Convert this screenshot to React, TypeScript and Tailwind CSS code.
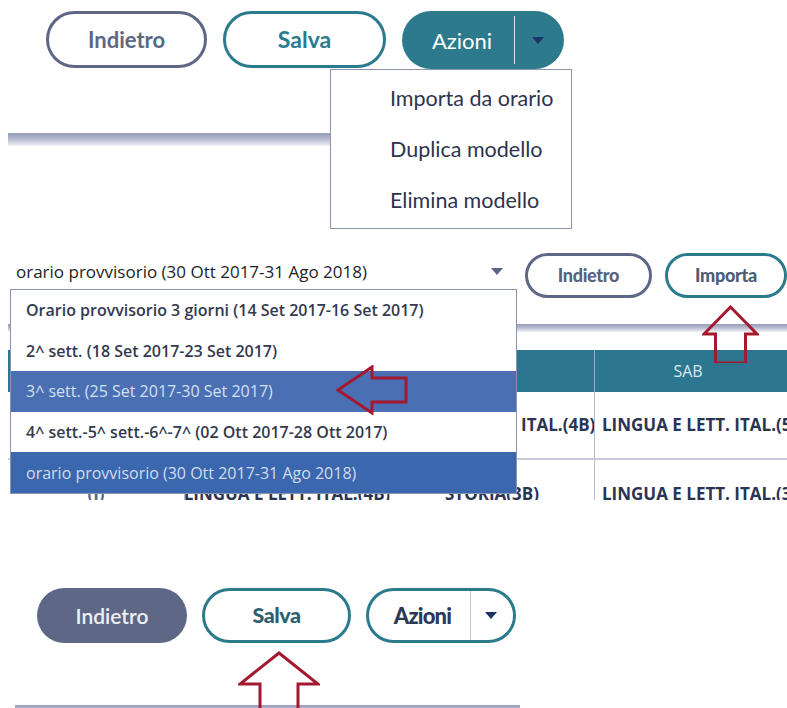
import React from "react";

const lato = { fontFamily: "Lato, 'Open Sans', sans-serif" };
const open = { fontFamily: "'Open Sans', 'Noto Sans', sans-serif" };

function Caret({ className }: { className?: string }) {
  return (
    <svg width="12" height="7" viewBox="0 0 12 7" className={className}>
      <path d="M0 0 L12 0 L6 7 Z" fill="currentColor" />
    </svg>
  );
}

function ArrowUp({ w, h, headH, shaftW, className }: { w: number; h: number; headH: number; shaftW: number; className?: string }) {
  const sx = (w - shaftW) / 2;
  const pts = `${w / 2},2 ${w - 2},${headH} ${sx + shaftW},${headH} ${sx + shaftW},${h} ${sx},${h} ${sx},${headH} 2,${headH}`;
  return (
    <svg width={w} height={h} viewBox={`0 0 ${w} ${h}`} className={className}>
      <polygon points={pts} fill="none" stroke="#a3192f" strokeWidth="3" strokeLinejoin="miter" />
    </svg>
  );
}

function ArrowLeft({ className }: { className?: string }) {
  return (
    <svg width="72" height="50" viewBox="0 0 72 50" className={className}>
      <polygon
        points="2,25 36,2 36,13 70,13 70,37 36,37 36,48"
        fill="none"
        stroke="#a3192f"
        strokeWidth="3"
      />
    </svg>
  );
}

function Bar({ className }: { className?: string }) {
  return <div className={`bg-gradient-to-b from-[#959cba] via-[#b9bed2] to-[#f1f2f6] ${className ?? ""}`} />;
}

const options = [
  { label: "Orario provvisorio 3 giorni (14 Set 2017-16 Set 2017)", tone: "plain" },
  { label: "2^ sett. (18 Set 2017-23 Set 2017)", tone: "plain" },
  { label: "3^ sett. (25 Set 2017-30 Set 2017)", tone: "hover" },
  { label: "4^ sett.-5^ sett.-6^-7^ (02 Ott 2017-28 Ott 2017)", tone: "plain" },
  { label: "orario provvisorio (30 Ott 2017-31 Ago 2018)", tone: "selected" },
];

export default function App() {
  return (
    <div className="w-[787px] bg-white">
      {/* first shot: buttons with the Azioni menu open */}
      <section className="relative h-[240px]">
        <div className="flex items-start gap-[16px] pl-[46px] pt-[11px]" style={lato}>
          <button className="flex h-[57px] w-[161px] items-center justify-center rounded-full border-[3px] border-[#5e6886] text-[22px] font-bold text-[#5e6886]">
            Indietro
          </button>
          <button className="flex h-[57px] w-[163px] items-center justify-center rounded-full border-[3px] border-[#2b7b8d] text-[23px] font-bold text-[#2b7b8d]">
            Salva
          </button>
          <div className="flex h-[58px] w-[162px] items-center rounded-full bg-[#2c7a8c]">
            <span className="flex flex-1 justify-center pl-[8px] text-[22px] text-white">Azioni</span>
            <span className="h-[48px] w-px bg-[#cfe1e6]" />
            <span className="flex w-[49px] justify-center pr-[4px] text-[#1c3566]">
              <Caret />
            </span>
          </div>
        </div>
        <Bar className="ml-[8px] mt-[64px] h-[13px] w-[322px]" />

        <div className="absolute left-[330px] top-[69px] flex h-[160px] w-[242px] flex-col border border-[#8c94ae] bg-white pl-[59px] pt-[3px] text-[21.5px] text-[#2d3450]" style={lato}>
          <span className="flex h-[51px] shrink-0 items-center">Importa da orario</span>
          <span className="flex h-[51px] shrink-0 items-center">Duplica modello</span>
          <span className="flex h-[51px] shrink-0 items-center">Elimina modello</span>
        </div>
      </section>

      {/* second shot: the select open above the table */}
      <section className="relative h-[260px] overflow-hidden">
        <div className="flex items-start pt-[13px]">
          <div className="ml-[10px] flex w-[500px] items-start">
            <div className="w-[466px] border-b border-[#3c8a9a] pb-[5px] pl-[6px] pt-[6px] text-[17px] text-[#1e1e1e]" style={open}>
              orario provvisorio (30 Ott 2017-31 Ago 2018)
            </div>
            <Caret className="ml-[15px] mt-[15px] text-[#5b6584]" />
          </div>
          <div className="ml-[19px] flex gap-[13px]" style={lato}>
            <button className="flex h-[45px] w-[127px] items-center justify-center rounded-full border-[3px] border-[#5e6886] text-[18px] font-black tracking-[-0.3px] text-[#58627f]">
              Indietro
            </button>
            <button className="flex h-[45px] w-[122px] items-center justify-center rounded-full border-[3px] border-[#2b7b8d] text-[18px] font-black tracking-[-0.3px] text-[#4f5b78]">
              Importa
            </button>
          </div>
        </div>
        <Bar className="ml-[8px] mt-[26px] h-[8px] w-[779px]" />

        <div className="ml-[8px] mt-[18px] w-[779px]" style={open}>
          <div className="grid h-[42px] grid-cols-[177px_205px_205px_192px] bg-[#2d7690] text-[16px] text-[#dbe8ee]">
            <div className="border-r border-[#8fb3c2]" />
            <div className="border-r border-[#8fb3c2]" />
            <div className="border-r border-[#8fb3c2]" />
            <div className="flex items-center justify-center pr-[6px]">SAB</div>
          </div>
          <div className="grid h-[68px] grid-cols-[177px_205px_205px_192px] border-b-2 border-[#c7cbd8] text-[17px] font-bold whitespace-nowrap text-[#2b3452]">
            <div className="border-r border-[#b6bccd]" />
            <div className="border-r border-[#b6bccd]" />
            <div className="flex items-center justify-center overflow-hidden border-r border-[#b6bccd]">LINGUA E LETT. ITAL.(4B)</div>
            <div className="flex items-center overflow-hidden pl-[7px]">LINGUA E LETT. ITAL.(5B)</div>
          </div>
          <div className="grid h-[68px] grid-cols-[177px_205px_205px_192px] text-[17px] font-bold whitespace-nowrap text-[#2b3452]">
            <div className="flex items-center justify-center border-r border-[#b6bccd] text-[#52698a]">(I)</div>
            <div className="flex items-center justify-center overflow-hidden border-r border-[#b6bccd]">LINGUA E LETT. ITAL.(4B)</div>
            <div className="flex items-center justify-center border-r border-[#b6bccd]">STORIA(3B)</div>
            <div className="flex items-center overflow-hidden pl-[7px]">LINGUA E LETT. ITAL.(3B)</div>
          </div>
        </div>

        <ul className="absolute left-[10px] top-[49px] w-[507px] border border-[#8a92ad] bg-white text-[16px]" style={open}>
          {options.map((o) => (
            <li
              key={o.label}
              className={
                o.tone === "plain"
                  ? "flex h-[40.6px] items-center pl-[15px] font-semibold text-[#333a4f]"
                  : o.tone === "hover"
                  ? "flex h-[40.6px] items-center bg-[#4a6fb3] pl-[15px] text-[#d6e0f0]"
                  : "flex h-[40.6px] items-center bg-[#3a67ad] pl-[15px] text-[#d2dcee]"
              }
            >
              {o.label}
            </li>
          ))}
        </ul>

        <ArrowLeft className="absolute left-[336px] top-[125px]" />
        <ArrowUp w={57} h={58} headH={29} shaftW={30} className="absolute left-[702px] top-[65px]" />
      </section>

      <div className="h-[80px]" />

      {/* third shot: new button style */}
      <section className="relative h-[128px] overflow-hidden">
        <div className="flex items-start gap-[15px] pl-[37px] pt-[8px]" style={lato}>
          <button className="flex h-[55px] w-[150px] items-center justify-center rounded-full bg-[#5e6886] text-[21px] font-semibold text-[#eef0f5]">
            Indietro
          </button>
          <button className="flex h-[55px] w-[149px] items-center justify-center rounded-full border-[3px] border-[#2b7b8d] text-[21.5px] font-black tracking-[-0.5px] text-[#2d5f70]">
            Salva
          </button>
          <div className="flex h-[55px] w-[150px] items-center rounded-full border-[3px] border-[#2b7b8d]">
            <span className="flex flex-1 justify-center pl-[6px] text-[22px] font-black tracking-[-0.8px] text-[#2c3a58]">Azioni</span>
            <span className="h-[49px] w-px bg-[#c3c8d6]" />
            <span className="flex w-[42px] justify-center pr-[3px] text-[#1c3566]">
              <Caret />
            </span>
          </div>
        </div>
        <Bar className="ml-[15px] mt-[62px] h-[8px] w-[505px]" />
        <ArrowUp w={82} h={60} headH={33} shaftW={38} className="absolute left-[238px] top-[71px]" />
      </section>
    </div>
  );
}
